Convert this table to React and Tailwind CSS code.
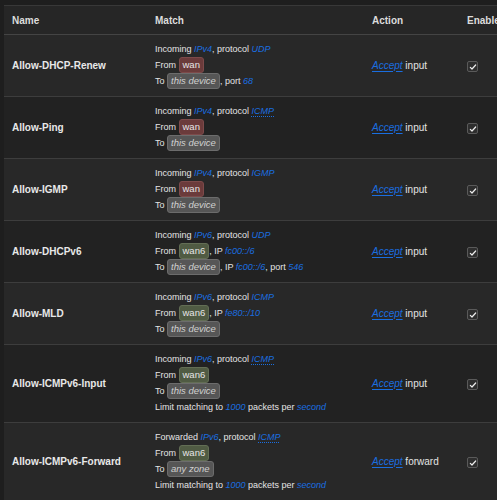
import React from "react";

const L = ({ children, u }) => (
  <span className={`italic text-[#1a6ee0] ${u ? "underline decoration-dotted underline-offset-2" : ""}`}>{children}</span>
);

const Zone = ({ kind, children }) => {
  const styles = {
    wan: "bg-[#6b3b3b] border-[#7d4a4a] text-[#e6e6e6]",
    wan6: "bg-[#505b43] border-[#636e55] text-[#e6e6e6]",
    dev: "bg-[#565656] border-[#6c6c6c] text-[#d0d0d0] italic",
  };
  return (
    <span className={`inline-block rounded-[3px] border px-[3px] text-[9.5px] leading-[14px] ${styles[kind]}`}>{children}</span>
  );
};

const Check = () => (
  <span className="inline-flex h-[11px] w-[11px] items-center justify-center rounded-[2px] border border-[#5a5a5a] bg-[#2e2e2e]">
    <svg viewBox="0 0 12 12" className="h-[8px] w-[8px]" fill="none">
      <path d="M2 6.5l2.5 2.5L10 3" stroke="#eeeeee" strokeWidth="1.8" strokeLinecap="round" strokeLinejoin="round" />
    </svg>
  </span>
);

const rules = [
  {
    name: "Allow-DHCP-Renew",
    lines: [
      <>Incoming <L>IPv4</L>, protocol <L>UDP</L></>,
      <>From <Zone kind="wan">wan</Zone></>,
      <>To <Zone kind="dev">this device</Zone>, port <L>68</L></>,
    ],
    action: "input",
  },
  {
    name: "Allow-Ping",
    lines: [
      <>Incoming <L>IPv4</L>, protocol <L u>ICMP</L></>,
      <>From <Zone kind="wan">wan</Zone></>,
      <>To <Zone kind="dev">this device</Zone></>,
    ],
    action: "input",
  },
  {
    name: "Allow-IGMP",
    lines: [
      <>Incoming <L>IPv4</L>, protocol <L>IGMP</L></>,
      <>From <Zone kind="wan">wan</Zone></>,
      <>To <Zone kind="dev">this device</Zone></>,
    ],
    action: "input",
  },
  {
    name: "Allow-DHCPv6",
    lines: [
      <>Incoming <L>IPv6</L>, protocol <L>UDP</L></>,
      <>From <Zone kind="wan6">wan6</Zone>, IP <L>fc00::/6</L></>,
      <>To <Zone kind="dev">this device</Zone>, IP <L>fc00::/6</L>, port <L>546</L></>,
    ],
    action: "input",
  },
  {
    name: "Allow-MLD",
    lines: [
      <>Incoming <L>IPv6</L>, protocol <L>ICMP</L></>,
      <>From <Zone kind="wan6">wan6</Zone>, IP <L>fe80::/10</L></>,
      <>To <Zone kind="dev">this device</Zone></>,
    ],
    action: "input",
  },
  {
    name: "Allow-ICMPv6-Input",
    lines: [
      <>Incoming <L>IPv6</L>, protocol <L u>ICMP</L></>,
      <>From <Zone kind="wan6">wan6</Zone></>,
      <>To <Zone kind="dev">this device</Zone></>,
      <>Limit matching to <L>1000</L> packets per <L>second</L></>,
    ],
    action: "input",
  },
  {
    name: "Allow-ICMPv6-Forward",
    lines: [
      <>Forwarded <L>IPv6</L>, protocol <L u>ICMP</L></>,
      <>From <Zone kind="wan6">wan6</Zone></>,
      <>To <Zone kind="dev">any zone</Zone></>,
      <>Limit matching to <L>1000</L> packets per <L>second</L></>,
    ],
    action: "forward",
  },
];

export default function App() {
  return (
    <div className="h-[500px] w-[497px] overflow-hidden bg-[#1e1e1e] pt-[5px] pl-[4px] font-['Liberation_Sans',Arial,sans-serif] text-[#e4e4e4]">
      <div className="w-[540px] border-t border-[#383838]">
        {/* Header */}
        <div className="flex h-[29px] items-center border-b border-[#444] bg-[#262626] text-[10px] font-bold text-[#dcdcdc]">
          <div className="w-[143px] pl-[8px]">Name</div>
          <div className="w-[217px] pl-[8px]">Match</div>
          <div className="w-[95px] pl-[8px]">Action</div>
          <div className="pl-[8px]">Enable</div>
        </div>

        {rules.map((r, i) => (
          <div
            key={r.name}
            className={`flex items-center whitespace-nowrap border-b border-[#3d3d3d] pt-[6px] pb-[7px] ${i % 2 === 0 ? "bg-[#282828]" : "bg-[#222222]"}`}
          >
            <div className="w-[143px] pl-[8px] text-[10px] font-bold text-[#e8e8e8]">{r.name}</div>
            <div className="w-[217px] pl-[8px] text-[9px] leading-[16px]">
              {r.lines.map((ln, j) => (
                <div key={j} className="h-[16px]">{ln}</div>
              ))}
            </div>
            <div className="w-[95px] pl-[8px] text-[10px]">
              <span className="italic text-[#1a6ee0] underline underline-offset-2">Accept</span> {r.action}
            </div>
            <div className="pl-[8px] pt-[1px]">
              <Check />
            </div>
          </div>
        ))}
      </div>
    </div>
  );
}
